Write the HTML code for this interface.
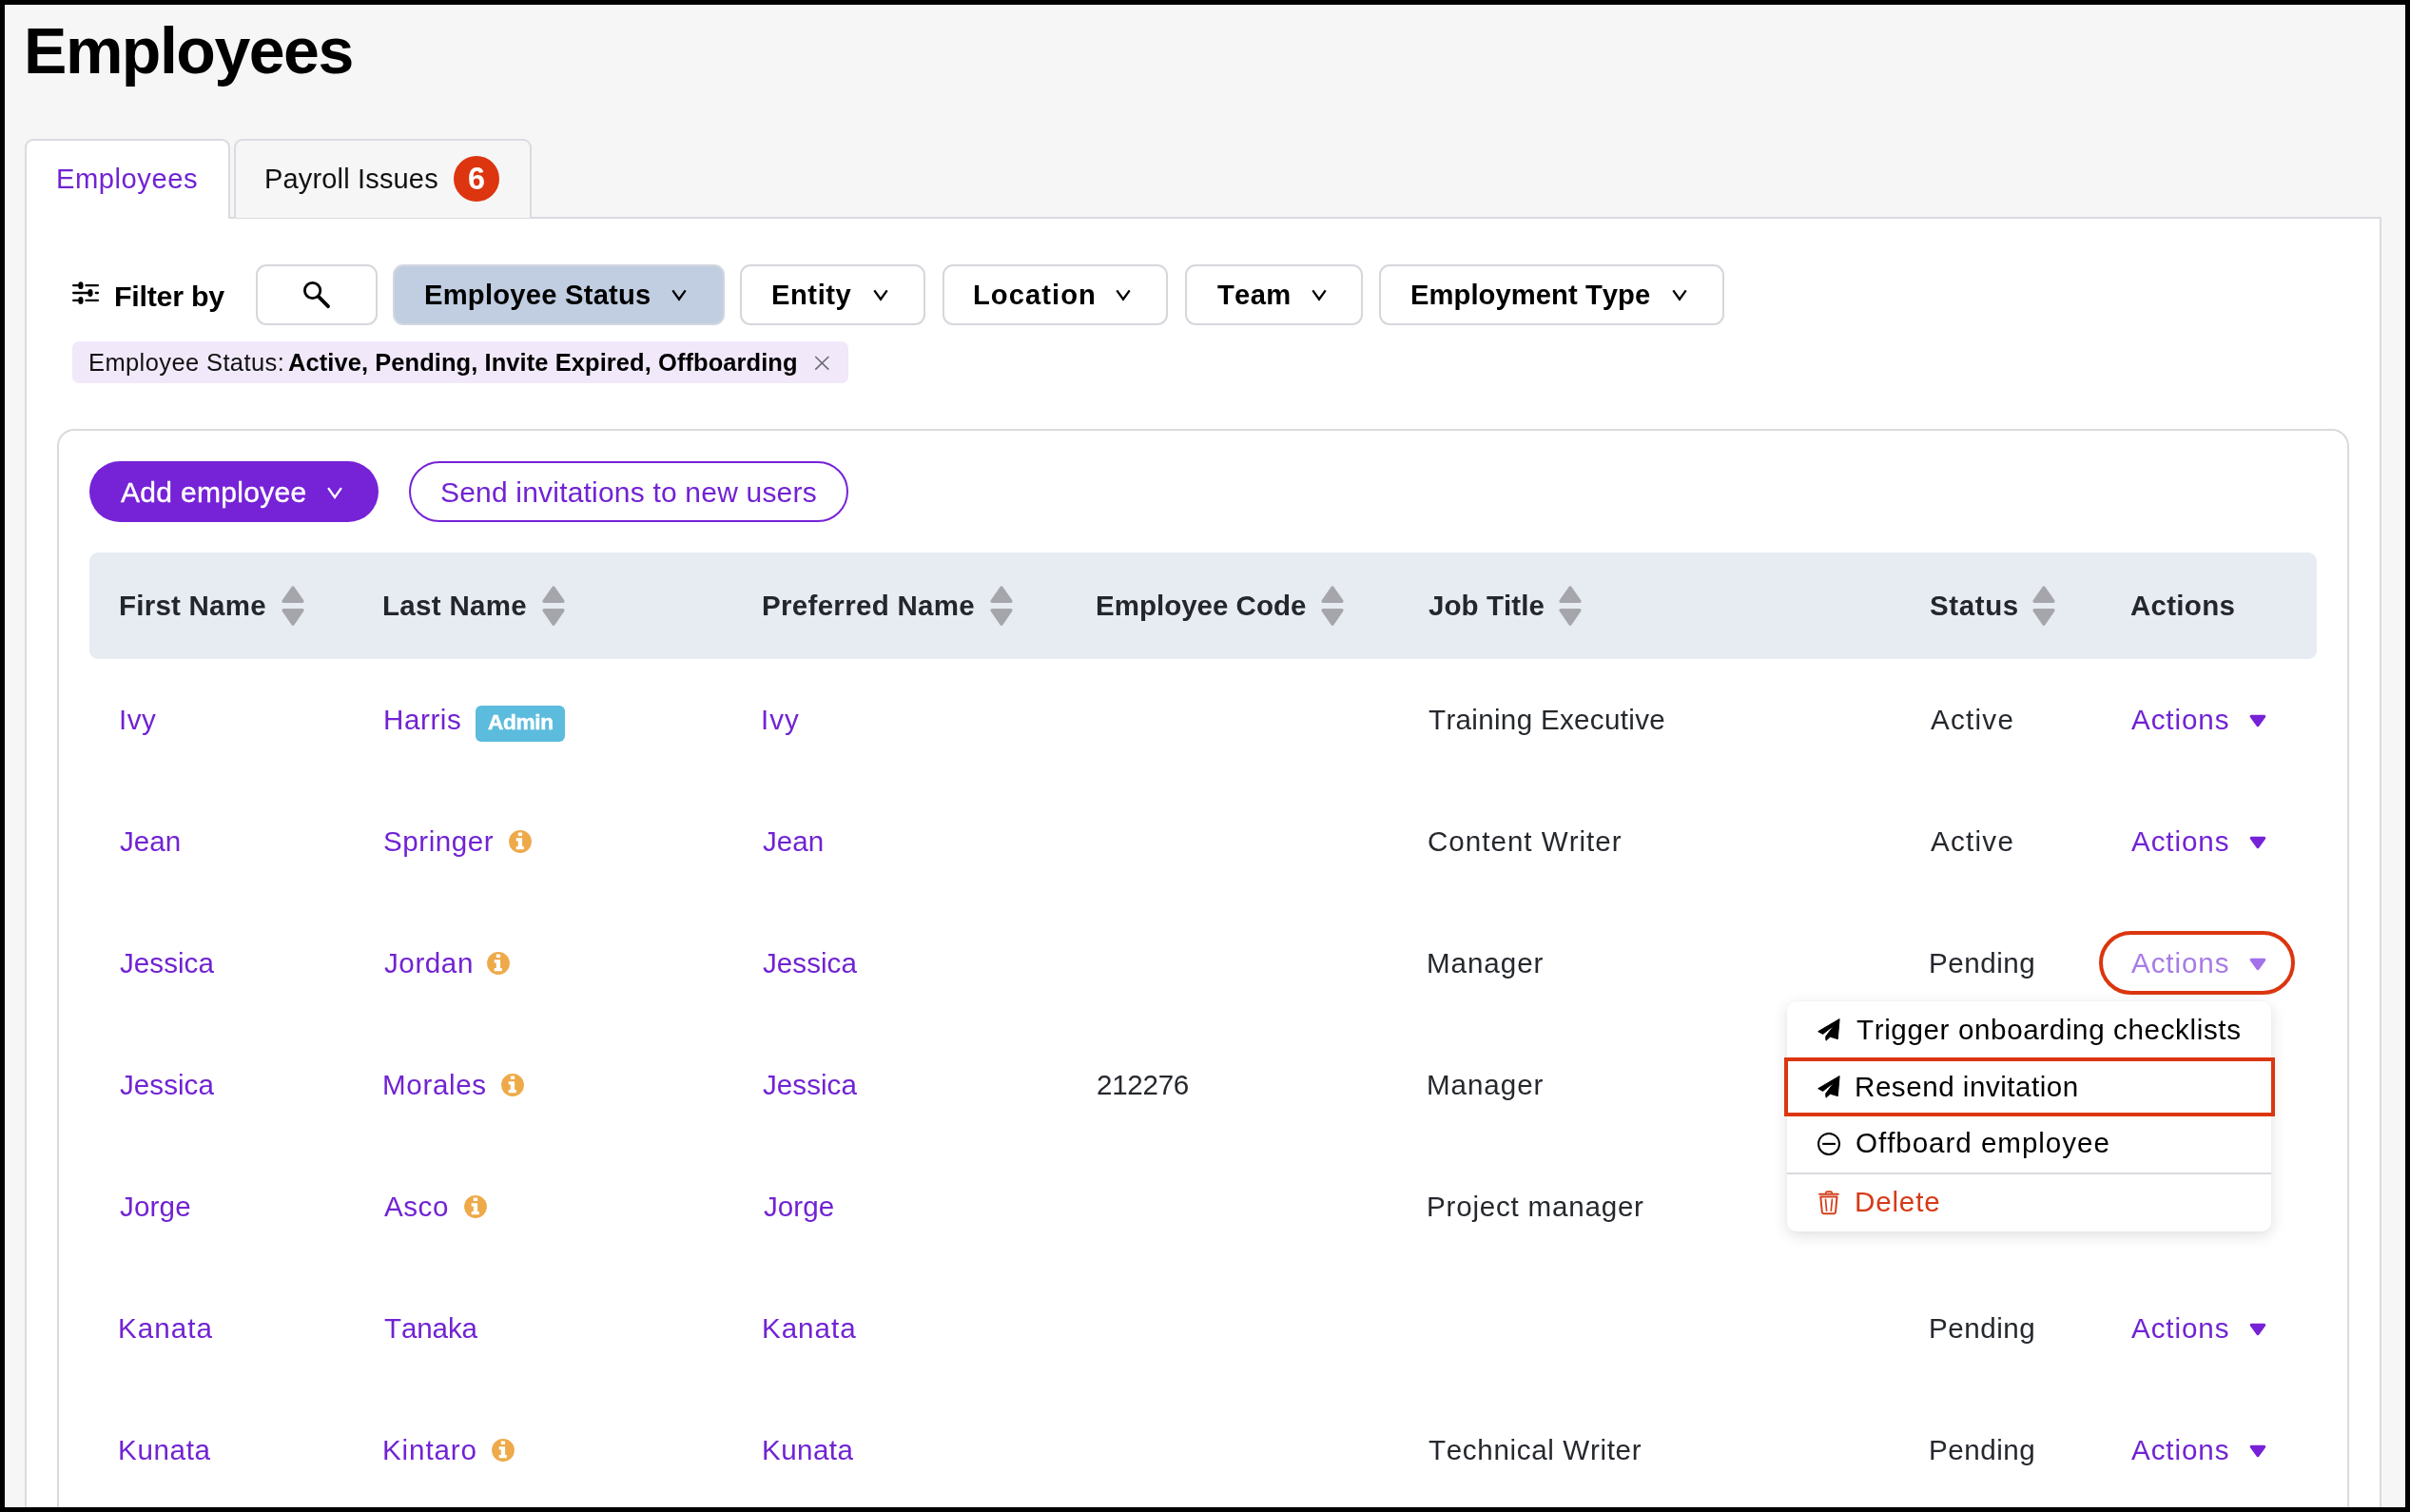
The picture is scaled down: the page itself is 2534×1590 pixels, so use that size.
<!DOCTYPE html>
<html lang="en"><head><meta charset="utf-8"><title>Employees</title>
<style>
html,body{margin:0;padding:0;}
body{width:2534px;height:1590px;position:relative;overflow:hidden;background:#f6f6f6;font-family:"Liberation Sans", Arial, Helvetica, sans-serif;}
.t{position:absolute;font-kerning:none;will-change:transform;white-space:nowrap;display:block;}
.b{position:absolute;display:block;}
</style></head><body>
<div class="b" style="left:26px;top:228px;width:2478px;height:1372px;background:#fff;border:2px solid #dadbe0;box-sizing:border-box;"></div>
<div class="b" style="left:26px;top:146.2px;width:216px;height:83.8px;background:#fff;border:2px solid #dadbe0;border-bottom:none;border-radius:9px 9px 0 0;box-sizing:border-box;"></div>
<div class="b" style="left:246px;top:146.2px;width:313px;height:82.8px;background:#f6f6f6;border:2px solid #dadbe0;border-bottom:none;border-radius:9px 9px 0 0;box-sizing:border-box;"></div>
<span class="t" style="left:25.35px;top:15px;font-size:68px;line-height:76px;font-weight:700;color:#000;letter-spacing:-1.478px;">Employees</span>
<span class="t" style="left:59.00px;top:172px;font-size:29.2px;line-height:32px;font-weight:400;color:#7123d3;letter-spacing:0.526px;">Employees</span>
<span class="t" style="left:278.22px;top:172px;font-size:29px;line-height:32px;font-weight:400;color:#111;letter-spacing:0.163px;">Payroll Issues</span>
<div class="b" style="left:477.1px;top:164px;width:48px;height:47.8px;background:#dc350f;border-radius:50%;"></div>
<span class="t" style="left:491.51px;top:170px;font-size:32.5px;line-height:36px;font-weight:700;color:#fff;letter-spacing:0.000px;">6</span>
<svg class="b" style="left:74px;top:294px" width="34" height="28" viewBox="74 294 34 28">
<g stroke="#000" stroke-width="2.3" stroke-linecap="round" fill="none">
<path d="M77.2 300.2H82M90.5 300.2H102.9M77.2 308H92M100.8 308H102.9M77.2 315.9H82M90.5 315.9H102.9"/></g>
<g fill="#000"><ellipse cx="84.9" cy="300.2" rx="2.7" ry="3.9"/><ellipse cx="94.9" cy="308" rx="2.7" ry="3.9"/><ellipse cx="84.9" cy="315.9" rx="2.7" ry="3.9"/></g></svg>
<span class="t" style="left:119.77px;top:294px;font-size:30.4px;line-height:34px;font-weight:700;color:#000;letter-spacing:-0.244px;">Filter by</span>
<div class="b" style="left:269.4px;top:278px;width:127.5px;height:63.8px;background:#fff;border:2px solid #d6d7dc;border-radius:11px;box-sizing:border-box;"></div>
<svg class="b" style="left:314px;top:290px" width="40" height="40" viewBox="314 290 40 40">
<circle cx="328.6" cy="305.5" r="8.2" fill="none" stroke="#000" stroke-width="2.8"/>
<path d="M335.6 312.6L345 322.2" stroke="#000" stroke-width="3.8" stroke-linecap="round"/></svg>
<div class="b" style="left:413.2px;top:278px;width:348.5px;height:63.8px;background:#c1cde0;border:2px solid #d2d7df;border-radius:11px;box-sizing:border-box;"></div>
<span class="t" style="left:446.05px;top:294px;font-size:29.2px;line-height:32px;font-weight:700;color:#000;letter-spacing:0.225px;">Employee Status</span>
<svg class="b" style="left:702.3px;top:297.8px" width="24" height="24" viewBox="-12 -12 24 24"><path d="M-6.7 -4.7L0 4.7L6.7 -4.7" fill="none" stroke="#000" stroke-width="2.3"/></svg>
<div class="b" style="left:778.4px;top:278px;width:194.8px;height:63.8px;background:#fff;border:2px solid #d6d7dc;border-radius:11px;box-sizing:border-box;"></div>
<span class="t" style="left:811.25px;top:294px;font-size:29.2px;line-height:32px;font-weight:700;color:#000;letter-spacing:0.539px;">Entity</span>
<svg class="b" style="left:913.9px;top:297.8px" width="24" height="24" viewBox="-12 -12 24 24"><path d="M-6.7 -4.7L0 4.7L6.7 -4.7" fill="none" stroke="#000" stroke-width="2.3"/></svg>
<div class="b" style="left:990.6px;top:278px;width:237.5px;height:63.8px;background:#fff;border:2px solid #d6d7dc;border-radius:11px;box-sizing:border-box;"></div>
<span class="t" style="left:1022.65px;top:294px;font-size:29.2px;line-height:32px;font-weight:700;color:#000;letter-spacing:1.029px;">Location</span>
<svg class="b" style="left:1169px;top:297.8px" width="24" height="24" viewBox="-12 -12 24 24"><path d="M-6.7 -4.7L0 4.7L6.7 -4.7" fill="none" stroke="#000" stroke-width="2.3"/></svg>
<div class="b" style="left:1245.7px;top:278px;width:187.8px;height:63.8px;background:#fff;border:2px solid #d6d7dc;border-radius:11px;box-sizing:border-box;"></div>
<span class="t" style="left:1279.67px;top:294px;font-size:29.2px;line-height:32px;font-weight:700;color:#000;letter-spacing:0.286px;">Team</span>
<svg class="b" style="left:1374.5px;top:297.8px" width="24" height="24" viewBox="-12 -12 24 24"><path d="M-6.7 -4.7L0 4.7L6.7 -4.7" fill="none" stroke="#000" stroke-width="2.3"/></svg>
<div class="b" style="left:1450.3px;top:278px;width:363px;height:63.8px;background:#fff;border:2px solid #d6d7dc;border-radius:11px;box-sizing:border-box;"></div>
<span class="t" style="left:1483.45px;top:294px;font-size:29.2px;line-height:32px;font-weight:700;color:#000;letter-spacing:0.061px;">Employment Type</span>
<svg class="b" style="left:1753.7px;top:297.8px" width="24" height="24" viewBox="-12 -12 24 24"><path d="M-6.7 -4.7L0 4.7L6.7 -4.7" fill="none" stroke="#000" stroke-width="2.3"/></svg>
<div class="b" style="left:76.1px;top:359px;width:815.6px;height:43.6px;background:#f1e8fa;border-radius:7px;"></div>
<span class="t" style="left:92.51px;top:367px;font-size:25.5px;line-height:28px;font-weight:400;color:#111;letter-spacing:0.391px;">Employee Status:</span>
<span class="t" style="left:303.46px;top:367px;font-size:25.5px;line-height:28px;font-weight:700;color:#000;letter-spacing:0.065px;">Active, Pending, Invite Expired, Offboarding</span>
<svg class="b" style="left:852px;top:370px" width="24" height="24" viewBox="852 370 24 24"><path d="M857.3 375L871.3 388.6M871.3 375L857.3 388.6" stroke="#6b6b70" stroke-width="1.6" fill="none"/></svg>
<div class="b" style="left:60px;top:451px;width:2410px;height:1169px;background:#fff;border:2px solid #dadadd;border-radius:18px;box-sizing:border-box;"></div>
<div class="b" style="left:94.1px;top:485.3px;width:303.6px;height:63.4px;background:#7622d7;border-radius:32px;"></div>
<span class="t" style="left:126.94px;top:501px;font-size:30px;line-height:33px;font-weight:400;color:#fff;letter-spacing:0.309px;-webkit-text-stroke:0.4px #fff;">Add employee</span>
<svg class="b" style="left:340.2px;top:505.79999999999995px" width="24" height="24" viewBox="-12 -12 24 24"><path d="M-6.9 -4.9L0 4.9L6.9 -4.9" fill="none" stroke="#fff" stroke-width="2.3"/></svg>
<div class="b" style="left:430.2px;top:485.3px;width:462.3px;height:63.4px;background:#fff;border:2px solid #7622d7;border-radius:32px;box-sizing:border-box;"></div>
<span class="t" style="left:463.24px;top:501px;font-size:30px;line-height:33px;font-weight:400;color:#7123d3;letter-spacing:0.194px;">Send invitations to new users</span>
<div class="b" style="left:94.1px;top:581px;width:2341.9px;height:112px;background:#e7ebf2;border-radius:9px;"></div>
<span class="t" style="left:124.63px;top:620px;font-size:29.5px;line-height:33px;font-weight:700;color:#23262b;letter-spacing:0.235px;">First Name</span>
<svg class="b" style="left:291.9px;top:612px" width="32" height="50" viewBox="291.9 612 32 50"><g fill="#a5a6ab" stroke="#a5a6ab" stroke-width="3.6" stroke-linejoin="round">
<path d="M307.9 618.2L317.7 632.2H298.09999999999997Z"/><path d="M307.9 656L317.7 641.8H298.09999999999997Z"/></g></svg>
<span class="t" style="left:402.03px;top:620px;font-size:29.5px;line-height:33px;font-weight:700;color:#23262b;letter-spacing:0.310px;">Last Name</span>
<svg class="b" style="left:566.3px;top:612px" width="32" height="50" viewBox="566.3 612 32 50"><g fill="#a5a6ab" stroke="#a5a6ab" stroke-width="3.6" stroke-linejoin="round">
<path d="M582.3 618.2L592.0999999999999 632.2H572.5Z"/><path d="M582.3 656L592.0999999999999 641.8H572.5Z"/></g></svg>
<span class="t" style="left:800.93px;top:620px;font-size:29.5px;line-height:33px;font-weight:700;color:#23262b;letter-spacing:0.312px;">Preferred Name</span>
<svg class="b" style="left:1036.5px;top:612px" width="32" height="50" viewBox="1036.5 612 32 50"><g fill="#a5a6ab" stroke="#a5a6ab" stroke-width="3.6" stroke-linejoin="round">
<path d="M1052.5 618.2L1062.3 632.2H1042.7Z"/><path d="M1052.5 656L1062.3 641.8H1042.7Z"/></g></svg>
<span class="t" style="left:1151.93px;top:620px;font-size:29.5px;line-height:33px;font-weight:700;color:#23262b;letter-spacing:0.006px;">Employee Code</span>
<svg class="b" style="left:1385.3px;top:612px" width="32" height="50" viewBox="1385.3 612 32 50"><g fill="#a5a6ab" stroke="#a5a6ab" stroke-width="3.6" stroke-linejoin="round">
<path d="M1401.3 618.2L1411.1 632.2H1391.5Z"/><path d="M1401.3 656L1411.1 641.8H1391.5Z"/></g></svg>
<span class="t" style="left:1501.75px;top:620px;font-size:29.5px;line-height:33px;font-weight:700;color:#23262b;letter-spacing:0.084px;">Job Title</span>
<svg class="b" style="left:1635.3px;top:612px" width="32" height="50" viewBox="1635.3 612 32 50"><g fill="#a5a6ab" stroke="#a5a6ab" stroke-width="3.6" stroke-linejoin="round">
<path d="M1651.3 618.2L1661.1 632.2H1641.5Z"/><path d="M1651.3 656L1661.1 641.8H1641.5Z"/></g></svg>
<span class="t" style="left:2028.55px;top:620px;font-size:29.5px;line-height:33px;font-weight:700;color:#23262b;letter-spacing:0.601px;">Status</span>
<svg class="b" style="left:2133px;top:612px" width="32" height="50" viewBox="2133 612 32 50"><g fill="#a5a6ab" stroke="#a5a6ab" stroke-width="3.6" stroke-linejoin="round">
<path d="M2149 618.2L2158.8 632.2H2139.2Z"/><path d="M2149 656L2158.8 641.8H2139.2Z"/></g></svg>
<span class="t" style="left:2239.97px;top:620px;font-size:29.5px;line-height:33px;font-weight:700;color:#23262b;letter-spacing:0.278px;">Actions</span>
<span class="t" style="left:125.27px;top:740px;font-size:29.6px;line-height:33px;font-weight:400;color:#7123d3;letter-spacing:0.483px;">Ivy</span>
<span class="t" style="left:402.57px;top:740px;font-size:29.6px;line-height:33px;font-weight:400;color:#7123d3;letter-spacing:0.574px;">Harris</span>
<span class="t" style="left:800.27px;top:740px;font-size:29.6px;line-height:33px;font-weight:400;color:#7123d3;letter-spacing:0.933px;">Ivy</span>
<div class="b" style="left:499.9px;top:742.2px;width:94px;height:37.5px;background:#5bbcdd;border-radius:6px;"></div>
<span class="t" style="left:512.84px;top:747px;font-size:22.6px;line-height:25px;font-weight:700;color:#fff;letter-spacing:-0.335px;-webkit-text-stroke:0.5px #fff;">Admin</span>
<span class="t" style="left:1501.54px;top:740px;font-size:29.6px;line-height:33px;font-weight:400;color:#25282d;letter-spacing:0.311px;">Training Executive</span>
<span class="t" style="left:2030.04px;top:740px;font-size:29.6px;line-height:33px;font-weight:400;color:#25282d;letter-spacing:1.254px;">Active</span>
<span class="t" style="left:2241.04px;top:740px;font-size:29.6px;line-height:33px;font-weight:400;color:#7123d3;letter-spacing:0.910px;">Actions</span>
<svg class="b" style="left:2362px;top:748px" width="24" height="20" viewBox="-12 -10 24 20"><path d="M-6.7 -4.6H6.7L0 4.6Z" fill="#7622d7" stroke="#7622d7" stroke-width="3.2" stroke-linejoin="round"/></svg>
<span class="t" style="left:126.14px;top:868px;font-size:29.6px;line-height:33px;font-weight:400;color:#7123d3;letter-spacing:0.033px;">Jean</span>
<span class="t" style="left:402.96px;top:868px;font-size:29.6px;line-height:33px;font-weight:400;color:#7123d3;letter-spacing:0.551px;">Springer</span>
<span class="t" style="left:802.14px;top:868px;font-size:29.6px;line-height:33px;font-weight:400;color:#7123d3;letter-spacing:0.033px;">Jean</span>
<svg class="b" style="left:534.3px;top:872px" width="26" height="26" viewBox="-13 -13 26 26"><circle r="11.9" fill="#eeaa49"/>
<path d="M-2.2 -9.4h4.3v3.4h-4.3zM-4.3 -3.7h6.4v8.6h1.7v3.3h-8.1v-3.3h2.1v-5.3h-2.1z" fill="#fff"/></svg>
<span class="t" style="left:1500.70px;top:868px;font-size:29.6px;line-height:33px;font-weight:400;color:#25282d;letter-spacing:0.983px;">Content Writer</span>
<span class="t" style="left:2030.04px;top:868px;font-size:29.6px;line-height:33px;font-weight:400;color:#25282d;letter-spacing:1.254px;">Active</span>
<span class="t" style="left:2241.04px;top:868px;font-size:29.6px;line-height:33px;font-weight:400;color:#7123d3;letter-spacing:0.910px;">Actions</span>
<svg class="b" style="left:2362px;top:876px" width="24" height="20" viewBox="-12 -10 24 20"><path d="M-6.7 -4.6H6.7L0 4.6Z" fill="#7622d7" stroke="#7622d7" stroke-width="3.2" stroke-linejoin="round"/></svg>
<span class="t" style="left:126.14px;top:996px;font-size:29.6px;line-height:33px;font-weight:400;color:#7123d3;letter-spacing:0.027px;">Jessica</span>
<span class="t" style="left:403.54px;top:996px;font-size:29.6px;line-height:33px;font-weight:400;color:#7123d3;letter-spacing:0.576px;">Jordan</span>
<span class="t" style="left:802.14px;top:996px;font-size:29.6px;line-height:33px;font-weight:400;color:#7123d3;letter-spacing:0.027px;">Jessica</span>
<svg class="b" style="left:511px;top:1000px" width="26" height="26" viewBox="-13 -13 26 26"><circle r="11.9" fill="#eeaa49"/>
<path d="M-2.2 -9.4h4.3v3.4h-4.3zM-4.3 -3.7h6.4v8.6h1.7v3.3h-8.1v-3.3h2.1v-5.3h-2.1z" fill="#fff"/></svg>
<span class="t" style="left:1499.77px;top:996px;font-size:29.6px;line-height:33px;font-weight:400;color:#25282d;letter-spacing:0.932px;">Manager</span>
<span class="t" style="left:2027.57px;top:996px;font-size:29.6px;line-height:33px;font-weight:400;color:#25282d;letter-spacing:0.534px;">Pending</span>
<span class="t" style="left:2241.04px;top:996px;font-size:29.6px;line-height:33px;font-weight:400;color:#a77be6;letter-spacing:0.910px;">Actions</span>
<svg class="b" style="left:2362px;top:1004px" width="24" height="20" viewBox="-12 -10 24 20"><path d="M-6.7 -4.6H6.7L0 4.6Z" fill="#a371ea" stroke="#a371ea" stroke-width="3.2" stroke-linejoin="round"/></svg>
<span class="t" style="left:126.14px;top:1124px;font-size:29.6px;line-height:33px;font-weight:400;color:#7123d3;letter-spacing:0.027px;">Jessica</span>
<span class="t" style="left:401.87px;top:1124px;font-size:29.6px;line-height:33px;font-weight:400;color:#7123d3;letter-spacing:0.637px;">Morales</span>
<span class="t" style="left:802.14px;top:1124px;font-size:29.6px;line-height:33px;font-weight:400;color:#7123d3;letter-spacing:0.027px;">Jessica</span>
<svg class="b" style="left:525.6px;top:1128px" width="26" height="26" viewBox="-13 -13 26 26"><circle r="11.9" fill="#eeaa49"/>
<path d="M-2.2 -9.4h4.3v3.4h-4.3zM-4.3 -3.7h6.4v8.6h1.7v3.3h-8.1v-3.3h2.1v-5.3h-2.1z" fill="#fff"/></svg>
<span class="t" style="left:1152.61px;top:1124px;font-size:29.6px;line-height:33px;font-weight:400;color:#25282d;letter-spacing:-0.297px;">212276</span>
<span class="t" style="left:1499.77px;top:1124px;font-size:29.6px;line-height:33px;font-weight:400;color:#25282d;letter-spacing:0.932px;">Manager</span>
<span class="t" style="left:126.14px;top:1252px;font-size:29.6px;line-height:33px;font-weight:400;color:#7123d3;letter-spacing:0.159px;">Jorge</span>
<span class="t" style="left:404.34px;top:1252px;font-size:29.6px;line-height:33px;font-weight:400;color:#7123d3;letter-spacing:0.532px;">Asco</span>
<span class="t" style="left:802.84px;top:1252px;font-size:29.6px;line-height:33px;font-weight:400;color:#7123d3;letter-spacing:0.059px;">Jorge</span>
<svg class="b" style="left:487.2px;top:1256px" width="26" height="26" viewBox="-13 -13 26 26"><circle r="11.9" fill="#eeaa49"/>
<path d="M-2.2 -9.4h4.3v3.4h-4.3zM-4.3 -3.7h6.4v8.6h1.7v3.3h-8.1v-3.3h2.1v-5.3h-2.1z" fill="#fff"/></svg>
<span class="t" style="left:1499.77px;top:1252px;font-size:29.6px;line-height:33px;font-weight:400;color:#25282d;letter-spacing:0.775px;">Project manager</span>
<span class="t" style="left:124.17px;top:1380px;font-size:29.6px;line-height:33px;font-weight:400;color:#7123d3;letter-spacing:1.023px;">Kanata</span>
<span class="t" style="left:403.74px;top:1380px;font-size:29.6px;line-height:33px;font-weight:400;color:#7123d3;letter-spacing:-0.133px;">Tanaka</span>
<span class="t" style="left:800.87px;top:1380px;font-size:29.6px;line-height:33px;font-weight:400;color:#7123d3;letter-spacing:0.963px;">Kanata</span>
<span class="t" style="left:2027.57px;top:1380px;font-size:29.6px;line-height:33px;font-weight:400;color:#25282d;letter-spacing:0.534px;">Pending</span>
<span class="t" style="left:2241.04px;top:1380px;font-size:29.6px;line-height:33px;font-weight:400;color:#7123d3;letter-spacing:0.910px;">Actions</span>
<svg class="b" style="left:2362px;top:1388px" width="24" height="20" viewBox="-12 -10 24 20"><path d="M-6.7 -4.6H6.7L0 4.6Z" fill="#7622d7" stroke="#7622d7" stroke-width="3.2" stroke-linejoin="round"/></svg>
<span class="t" style="left:124.17px;top:1508px;font-size:29.6px;line-height:33px;font-weight:400;color:#7123d3;letter-spacing:0.643px;">Kunata</span>
<span class="t" style="left:401.97px;top:1508px;font-size:29.6px;line-height:33px;font-weight:400;color:#7123d3;letter-spacing:0.881px;">Kintaro</span>
<span class="t" style="left:800.87px;top:1508px;font-size:29.6px;line-height:33px;font-weight:400;color:#7123d3;letter-spacing:0.423px;">Kunata</span>
<svg class="b" style="left:516px;top:1512px" width="26" height="26" viewBox="-13 -13 26 26"><circle r="11.9" fill="#eeaa49"/>
<path d="M-2.2 -9.4h4.3v3.4h-4.3zM-4.3 -3.7h6.4v8.6h1.7v3.3h-8.1v-3.3h2.1v-5.3h-2.1z" fill="#fff"/></svg>
<span class="t" style="left:1501.54px;top:1508px;font-size:29.6px;line-height:33px;font-weight:400;color:#25282d;letter-spacing:0.649px;">Technical Writer</span>
<span class="t" style="left:2027.57px;top:1508px;font-size:29.6px;line-height:33px;font-weight:400;color:#25282d;letter-spacing:0.534px;">Pending</span>
<span class="t" style="left:2241.04px;top:1508px;font-size:29.6px;line-height:33px;font-weight:400;color:#7123d3;letter-spacing:0.910px;">Actions</span>
<svg class="b" style="left:2362px;top:1516px" width="24" height="20" viewBox="-12 -10 24 20"><path d="M-6.7 -4.6H6.7L0 4.6Z" fill="#7622d7" stroke="#7622d7" stroke-width="3.2" stroke-linejoin="round"/></svg>
<div class="b" style="left:2207.1px;top:978.7px;width:206.1px;height:67.8px;border:4.8px solid #db360f;border-radius:34px;box-sizing:border-box;"></div>
<div class="b" style="left:1879.1px;top:1052.9px;width:509.1px;height:242.2px;background:#fff;border-radius:10px;box-shadow:0 4px 16px rgba(0,0,0,0.13),0 0 2px rgba(0,0,0,0.05);"></div>
<svg class="b" style="left:1909px;top:1069px" width="29" height="29" viewBox="-2 -2 29 29"><path d="M23.1 0.6L0.7 13.7L5.7 16.4L17.7 6.9L8.7 19.0L9.0 23.2L13.4 19.2L21.3 21.6Z" fill="#000" stroke="#000" stroke-width="1.0" stroke-linejoin="round"/></svg>
<span class="t" style="left:1951.84px;top:1066px;font-size:29.6px;line-height:33px;font-weight:400;color:#000;letter-spacing:0.621px;">Trigger onboarding checklists</span>
<svg class="b" style="left:1909px;top:1128.8px" width="29" height="29" viewBox="-2 -2 29 29"><path d="M23.1 0.6L0.7 13.7L5.7 16.4L17.7 6.9L8.7 19.0L9.0 23.2L13.4 19.2L21.3 21.6Z" fill="#000" stroke="#000" stroke-width="1.0" stroke-linejoin="round"/></svg>
<span class="t" style="left:1950.07px;top:1126px;font-size:29.6px;line-height:33px;font-weight:400;color:#000;letter-spacing:0.517px;">Resend invitation</span>
<svg class="b" style="left:1909px;top:1189px" width="28" height="28" viewBox="1909 1189 28 28"><circle cx="1923" cy="1202.9" r="11" fill="none" stroke="#000" stroke-width="2"/><path d="M1916.2 1202.9H1929.9" stroke="#000" stroke-width="2.1"/></svg>
<span class="t" style="left:1951.10px;top:1185px;font-size:29.6px;line-height:33px;font-weight:400;color:#000;letter-spacing:0.948px;">Offboard employee</span>
<div class="b" style="left:1879.1px;top:1233.2px;width:509.1px;height:1.6px;background:#d9dade;"></div>
<svg class="b" style="left:1909px;top:1250px" width="28" height="30" viewBox="1909 1250 28 30"><g fill="none" stroke="#d4411e" stroke-width="2" stroke-linecap="round" stroke-linejoin="round">
<path d="M1913 1255.8H1932.8"/><path d="M1919.8 1254.2L1920.8 1253.2H1925.2L1926.2 1254.2" stroke-width="1.8"/>
<path d="M1914.3 1258.6H1931.5L1930 1274.6Q1929.8 1276.2 1928.2 1276.2H1917.6Q1916 1276.2 1915.8 1274.6Z"/>
<path d="M1919.5 1261.4L1920.6 1273.2M1926.4 1261.4L1925.3 1273.2" stroke-width="1.7"/></g></svg>
<span class="t" style="left:1950.07px;top:1247px;font-size:29.6px;line-height:33px;font-weight:400;color:#d63a17;letter-spacing:0.816px;">Delete</span>
<div class="b" style="left:1876.3px;top:1112.2px;width:515.6px;height:61.5px;border:4.8px solid #db360f;box-sizing:border-box;"></div>
<div class="b" style="left:0px;top:0px;width:2534px;height:5px;background:#000;"></div>
<div class="b" style="left:0px;top:1585px;width:2534px;height:5px;background:#000;"></div>
<div class="b" style="left:0px;top:0px;width:5px;height:1590px;background:#000;"></div>
<div class="b" style="left:2529px;top:0px;width:5px;height:1590px;background:#000;"></div>
</body></html>
